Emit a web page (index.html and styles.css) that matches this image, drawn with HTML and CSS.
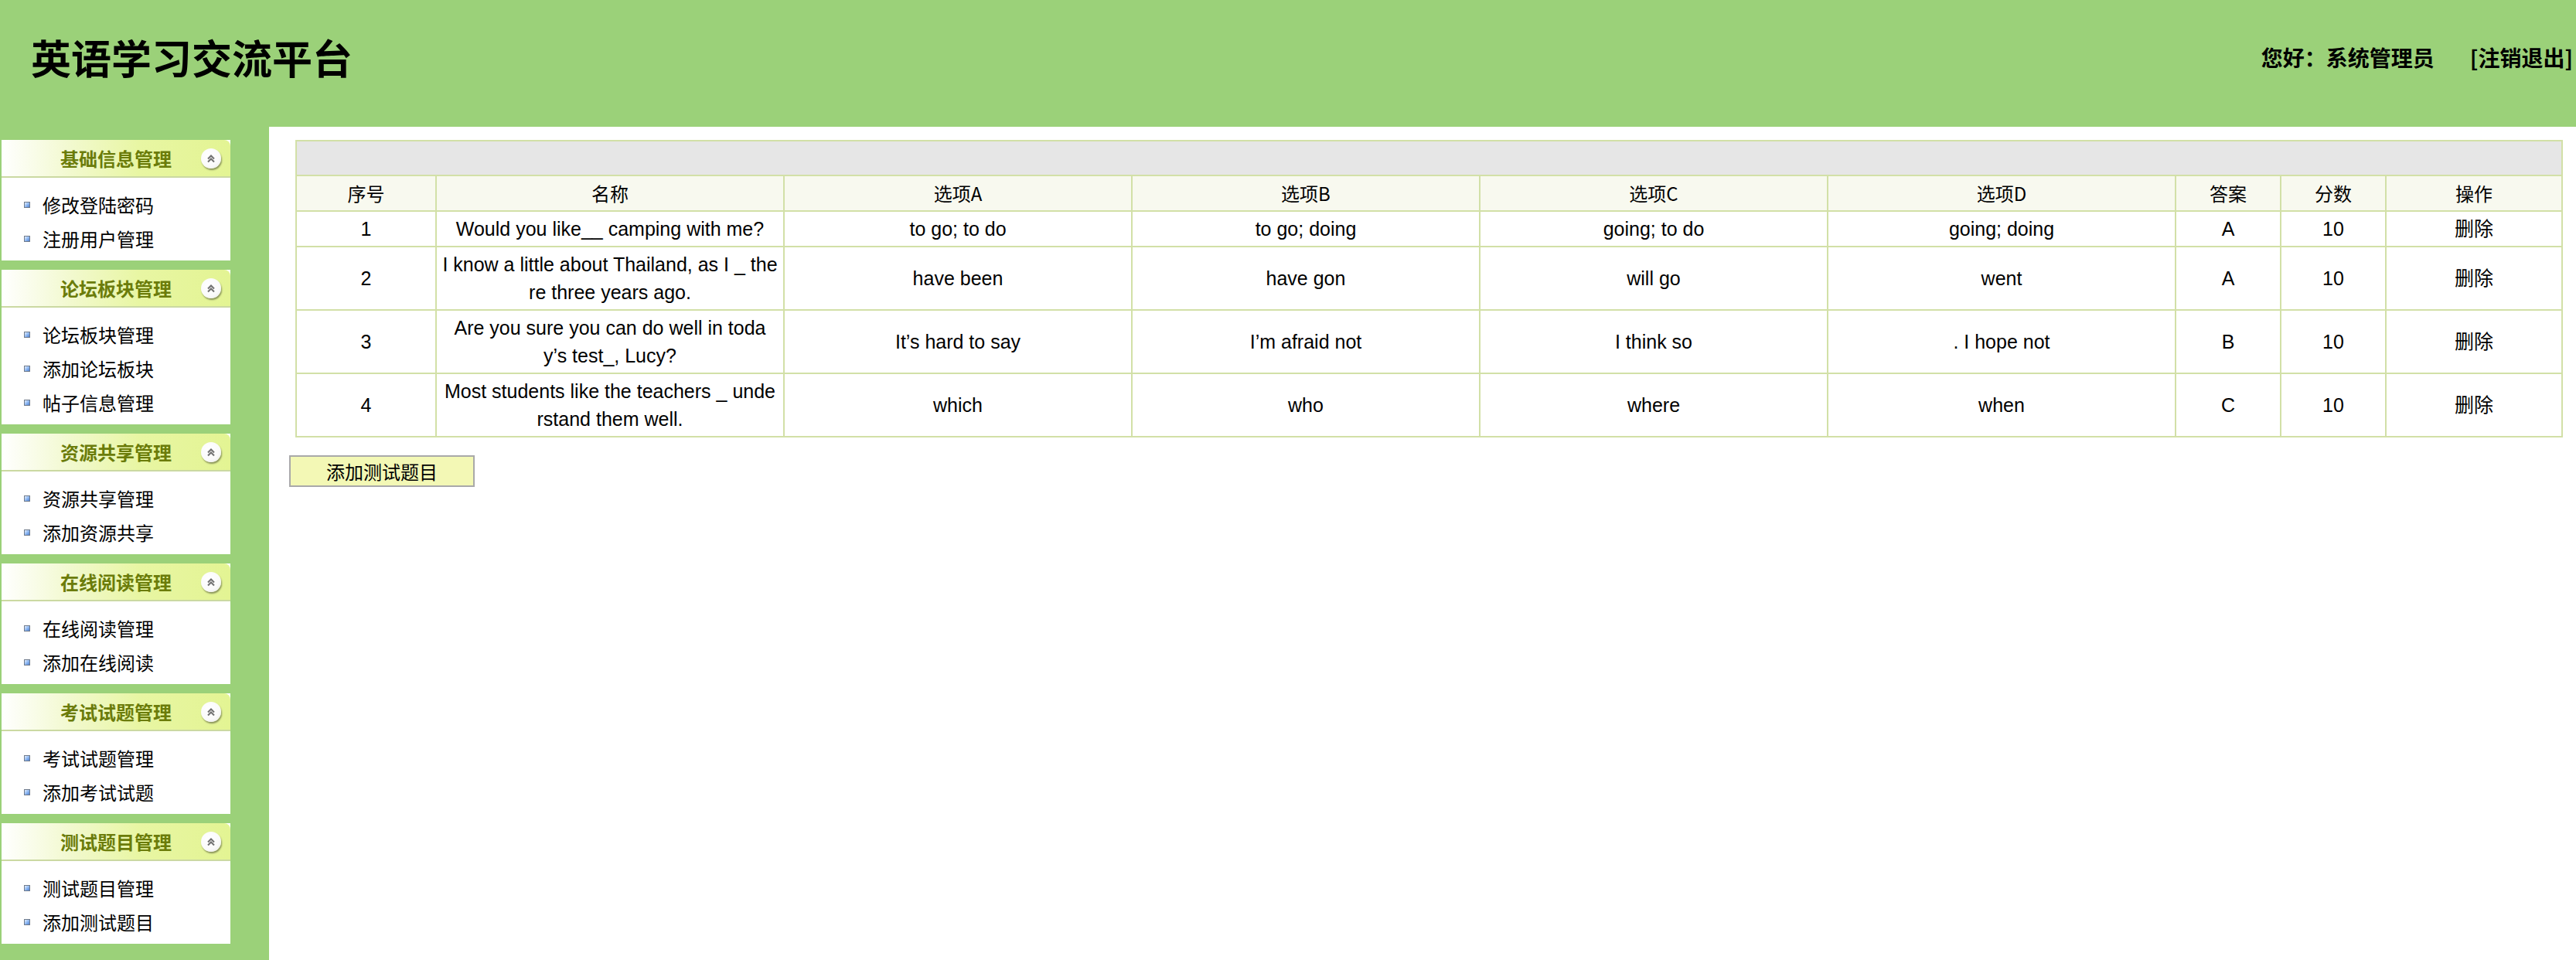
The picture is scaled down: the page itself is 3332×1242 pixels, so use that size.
FILE: index.html
```html
<!DOCTYPE html>
<html lang="zh-CN">
<head>
<meta charset="utf-8">
<title>英语学习交流平台</title>
<link rel="stylesheet" href="styles.css">
</head>
<body>
<header class="topbar">
  <h1 class="site-title">英语学习交流平台</h1>
  <div class="user-info">
    <span class="greet">您好：系统管理员</span>
    <a class="logout" href="#">[注销退出]</a>
  </div>
</header>
<div class="layout">
  <aside class="sidebar">
    <section class="panel">
      <div class="panel-head"><span class="panel-title">基础信息管理</span><span class="toggle"><svg viewBox="0 0 26 26" width="26" height="26"><path d="M9 13.5 L13 9.5 L17 13.5 M9 17.5 L13 13.5 L17 17.5" fill="none" stroke="#707070" stroke-width="2"/></svg></span></div>
      <ul class="panel-body">
        <li><i class="dot"></i>修改登陆密码</li>
        <li><i class="dot"></i>注册用户管理</li>
      </ul>
    </section>
    <section class="panel">
      <div class="panel-head"><span class="panel-title">论坛板块管理</span><span class="toggle"><svg viewBox="0 0 26 26" width="26" height="26"><path d="M9 13.5 L13 9.5 L17 13.5 M9 17.5 L13 13.5 L17 17.5" fill="none" stroke="#707070" stroke-width="2"/></svg></span></div>
      <ul class="panel-body">
        <li><i class="dot"></i>论坛板块管理</li>
        <li><i class="dot"></i>添加论坛板块</li>
        <li><i class="dot"></i>帖子信息管理</li>
      </ul>
    </section>
    <section class="panel">
      <div class="panel-head"><span class="panel-title">资源共享管理</span><span class="toggle"><svg viewBox="0 0 26 26" width="26" height="26"><path d="M9 13.5 L13 9.5 L17 13.5 M9 17.5 L13 13.5 L17 17.5" fill="none" stroke="#707070" stroke-width="2"/></svg></span></div>
      <ul class="panel-body">
        <li><i class="dot"></i>资源共享管理</li>
        <li><i class="dot"></i>添加资源共享</li>
      </ul>
    </section>
    <section class="panel">
      <div class="panel-head"><span class="panel-title">在线阅读管理</span><span class="toggle"><svg viewBox="0 0 26 26" width="26" height="26"><path d="M9 13.5 L13 9.5 L17 13.5 M9 17.5 L13 13.5 L17 17.5" fill="none" stroke="#707070" stroke-width="2"/></svg></span></div>
      <ul class="panel-body">
        <li><i class="dot"></i>在线阅读管理</li>
        <li><i class="dot"></i>添加在线阅读</li>
      </ul>
    </section>
    <section class="panel">
      <div class="panel-head"><span class="panel-title">考试试题管理</span><span class="toggle"><svg viewBox="0 0 26 26" width="26" height="26"><path d="M9 13.5 L13 9.5 L17 13.5 M9 17.5 L13 13.5 L17 17.5" fill="none" stroke="#707070" stroke-width="2"/></svg></span></div>
      <ul class="panel-body">
        <li><i class="dot"></i>考试试题管理</li>
        <li><i class="dot"></i>添加考试试题</li>
      </ul>
    </section>
    <section class="panel">
      <div class="panel-head"><span class="panel-title">测试题目管理</span><span class="toggle"><svg viewBox="0 0 26 26" width="26" height="26"><path d="M9 13.5 L13 9.5 L17 13.5 M9 17.5 L13 13.5 L17 17.5" fill="none" stroke="#707070" stroke-width="2"/></svg></span></div>
      <ul class="panel-body">
        <li><i class="dot"></i>测试题目管理</li>
        <li><i class="dot"></i>添加测试题目</li>
      </ul>
    </section>
  </aside>
  <main class="content">
    <table class="grid">
      <colgroup>
        <col class="c-no"><col class="c-wide"><col class="c-wide"><col class="c-wide"><col class="c-wide"><col class="c-wide"><col class="c-small"><col class="c-small"><col class="c-op">
      </colgroup>
      <tr class="caption-row"><td colspan="9"></td></tr>
      <tr class="head-row">
        <th>序号</th><th>名称</th><th>选项A</th><th>选项B</th><th>选项C</th><th>选项D</th><th>答案</th><th>分数</th><th>操作</th>
      </tr>
      <tr>
        <td>1</td><td>Would you like__ camping with me?</td><td>to go; to do</td><td>to go; doing</td><td>going; to do</td><td>going; doing</td><td>A</td><td>10</td><td>删除</td>
      </tr>
      <tr>
        <td>2</td><td>I know a little about Thailand, as I _ the<br>re three years ago.</td><td>have been</td><td>have gon</td><td>will go</td><td>went</td><td>A</td><td>10</td><td>删除</td>
      </tr>
      <tr>
        <td>3</td><td>Are you sure you can do well in toda<br>y’s test_, Lucy?</td><td>It’s hard to say</td><td>I’m afraid not</td><td>I think so</td><td>. I hope not</td><td>B</td><td>10</td><td>删除</td>
      </tr>
      <tr>
        <td>4</td><td>Most students like the teachers _ unde<br>rstand them well.</td><td>which</td><td>who</td><td>where</td><td>when</td><td>C</td><td>10</td><td>删除</td>
      </tr>
    </table>
    <button class="add-btn" type="button">添加测试题目</button>
  </main>
</div>
</body>
</html>
```

FILE: styles.css
```css
html, body {
  margin: 0;
  padding: 0;
  height: 100%;
}
body {
  font-family: "Noto Sans CJK SC", "Liberation Sans", sans-serif;
  background: #ffffff;
  color: #000;
}
.topbar {
  height: 164px;
  background: #9bd179;
  display: flex;
  align-items: center;
  justify-content: space-between;
  padding: 0 4px 16px 40px;
  box-sizing: border-box;
}
.site-title {
  margin: 0;
  font-size: 52px;
  font-weight: bold;
  line-height: 1;
  letter-spacing: 0;
}
.user-info {
  display: flex;
  align-items: center;
  font-size: 28px;
  font-weight: bold;
}
.greet {
  margin-right: 46px;
}
.logout {
  color: #000;
  text-decoration: none;
}
.layout {
  display: flex;
  min-height: calc(100vh - 164px);
}
.sidebar {
  width: 348px;
  flex: none;
  background: #9bd179;
  padding: 17px 0 0 2px;
  box-sizing: border-box;
  display: flex;
  flex-direction: column;
  gap: 12px;
}
.panel {
  width: 296px;
  background: #fff;
}
.panel-head {
  height: 47px;
  border-bottom: 2px solid #cbd9a2;
  border-radius: 8px 8px 0 0;
  background: linear-gradient(to right, #ffffff 0%, #f2f9cf 30%, #e8f6a3 60%, #e3f493 100%);
  display: grid;
  grid-template-columns: 1fr auto 1fr;
  align-items: center;
}
.panel-title {
  grid-column: 2;
  font-size: 24px;
  font-weight: bold;
  color: #6b7c0a;
  line-height: 1;
}
.toggle {
  grid-column: 3;
  justify-self: end;
  margin-right: 12px;
  width: 26px;
  height: 26px;
  border-radius: 50%;
  background: radial-gradient(circle at 40% 35%, #ffffff 0%, #fafafa 60%, #e2e2e2 100%);
  box-shadow: 1px 2px 2px rgba(0, 0, 0, 0.4);
  display: block;
}
.toggle svg {
  display: block;
}
.panel-body {
  list-style: none;
  margin: 0;
  padding: 13px 0 6px 29px;
}
.panel-body li {
  height: 44px;
  line-height: 44px;
  font-size: 24px;
  display: flex;
  align-items: center;
}
.dot {
  width: 6px;
  height: 6px;
  border: 1px solid #6f7b8c;
  background: linear-gradient(135deg, #e6f0ff 0%, #93bbf2 50%, #4f82d4 100%);
  margin-right: 16px;
  flex: none;
}
.content {
  flex: 1;
  background: #fff;
  padding: 17px 19px 0 26px;
}
.grid {
  width: 2931px;
  margin-left: 8px;
  border-collapse: collapse;
  table-layout: fixed;
  font-family: "Liberation Sans", "Noto Sans CJK SC", sans-serif;
  font-size: 25px;
  border: 2px solid #d2e0a7;
}
.c-no { width: 181px; }
.c-wide { width: 450px; }
.c-small { width: 136px; }
.c-op { width: 228px; }
.grid td, .grid th {
  border: 2px solid #d2e0a7;
  padding: 4px 0;
  line-height: 36px;
  text-align: center;
  vertical-align: middle;
  font-weight: normal;
}
.grid th {
  background: #f8f9ef;
  font-family: "Noto Sans CJK SC", "Liberation Sans", sans-serif;
  font-size: 24px;
}
.caption-row td {
  background: #e6e6e6;
  height: 35px;
}
.add-btn {
  display: block;
  margin-top: 23px;
  width: 240px;
  height: 41px;
  background: #f3f8b5;
  border: 2px solid #a9a9a9;
  font-family: "Noto Sans CJK SC", sans-serif;
  font-size: 24px;
  color: #000;
  padding: 0;
  line-height: 1;
}
```
